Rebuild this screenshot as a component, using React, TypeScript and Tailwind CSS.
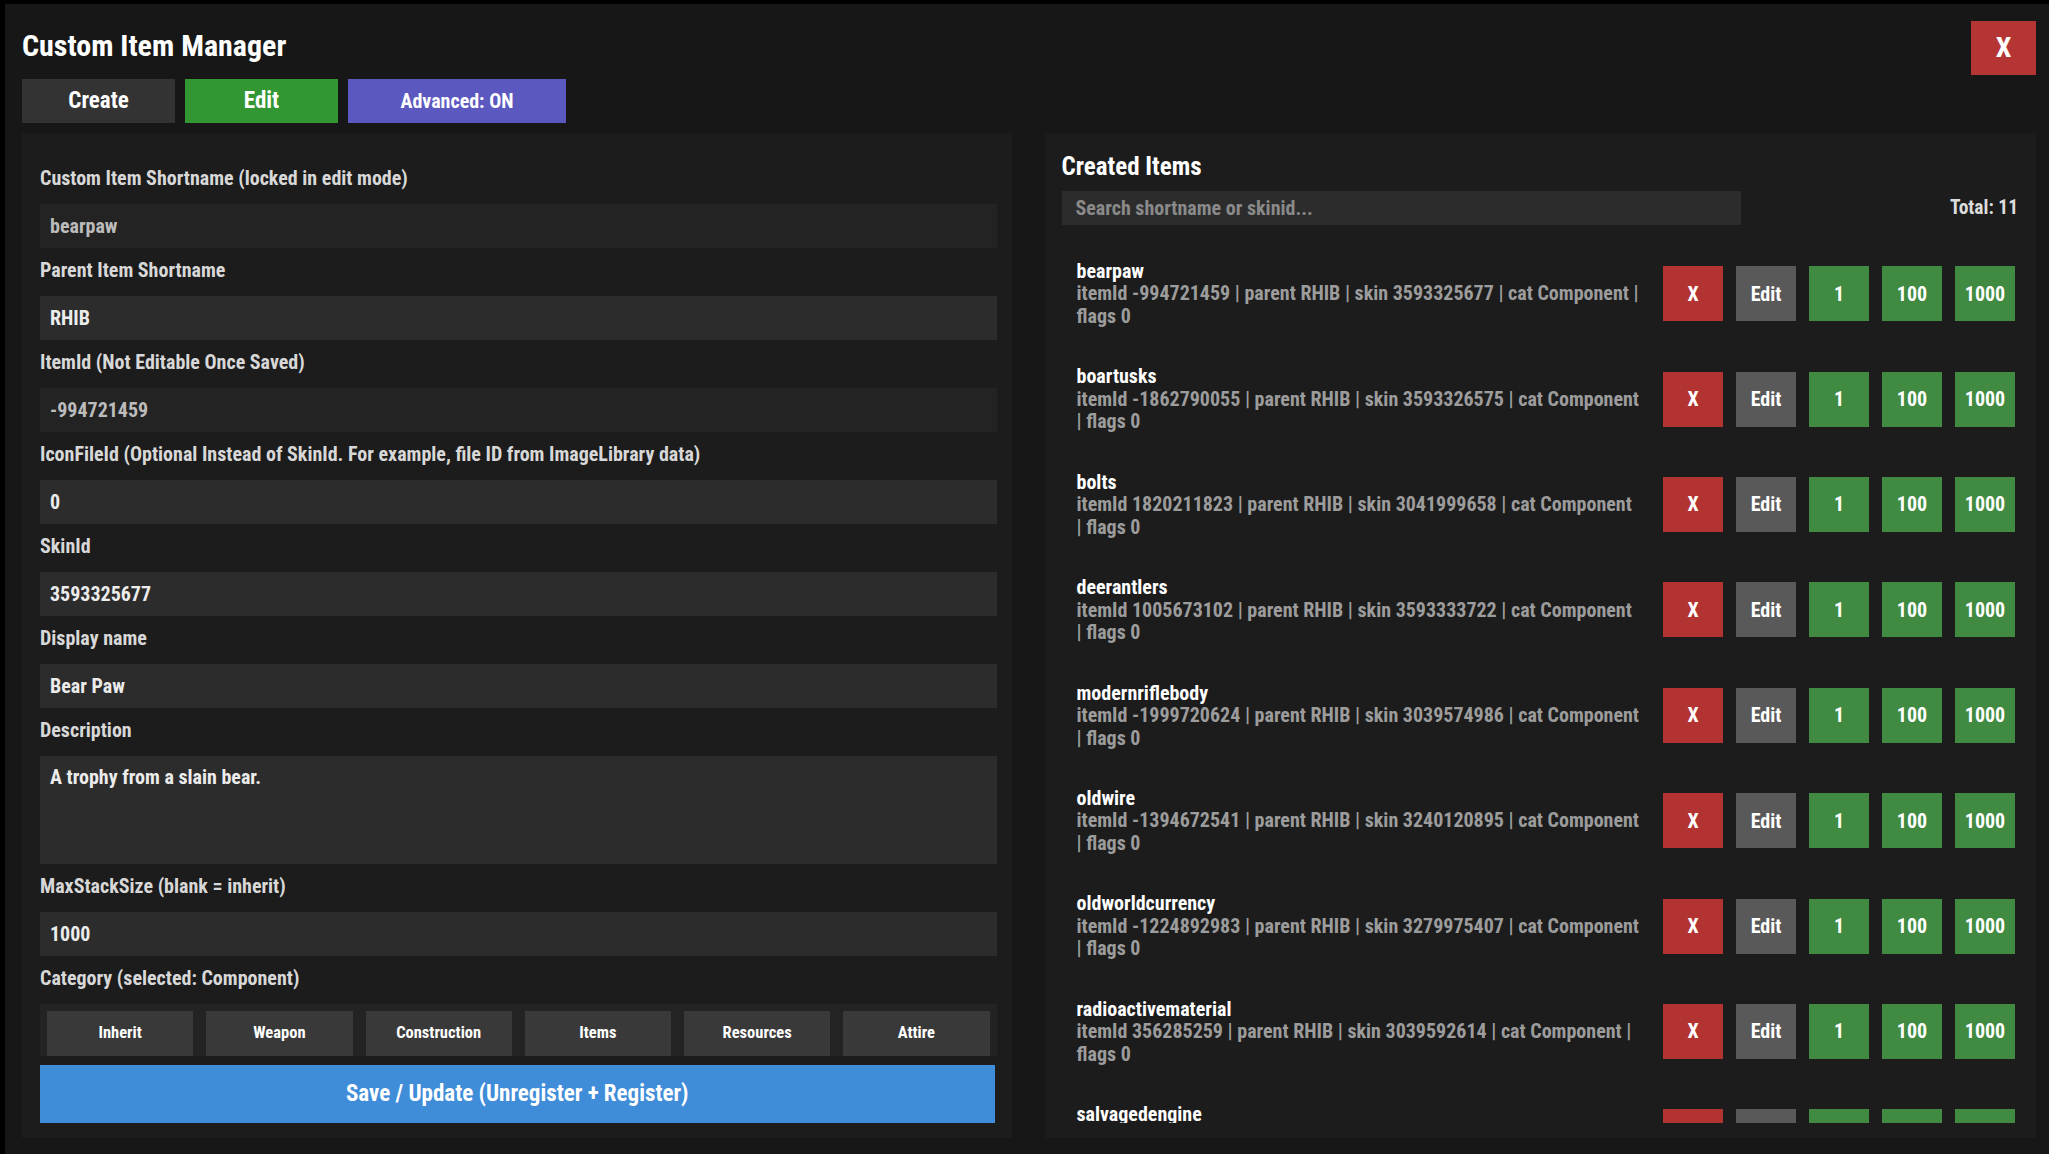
import React from "react";

const F = "font-['Roboto_Condensed','Roboto',sans-serif] [font-stretch:condensed] font-bold";

type Field = { label: string; value: string; locked?: boolean; area?: boolean };

const fields: Field[] = [
  { label: "Custom Item Shortname (locked in edit mode)", value: "bearpaw", locked: true },
  { label: "Parent Item Shortname", value: "RHIB" },
  { label: "ItemId (Not Editable Once Saved)", value: "-994721459", locked: true },
  { label: "IconFileId (Optional Instead of SkinId. For example, file ID from ImageLibrary data)", value: "0" },
  { label: "SkinId", value: "3593325677" },
  { label: "Display name", value: "Bear Paw" },
  { label: "Description", value: "A trophy from a slain bear.", area: true },
  { label: "MaxStackSize (blank = inherit)", value: "1000" },
];

const items: { name: string; l1: string; l2: string }[] = [
  { name: "bearpaw", l1: "itemId -994721459 | parent RHIB | skin 3593325677 | cat Component |", l2: "flags 0" },
  { name: "boartusks", l1: "itemId -1862790055 | parent RHIB | skin 3593326575 | cat Component", l2: "| flags 0" },
  { name: "bolts", l1: "itemId 1820211823 | parent RHIB | skin 3041999658 | cat Component", l2: "| flags 0" },
  { name: "deerantlers", l1: "itemId 1005673102 | parent RHIB | skin 3593333722 | cat Component", l2: "| flags 0" },
  { name: "modernriflebody", l1: "itemId -1999720624 | parent RHIB | skin 3039574986 | cat Component", l2: "| flags 0" },
  { name: "oldwire", l1: "itemId -1394672541 | parent RHIB | skin 3240120895 | cat Component", l2: "| flags 0" },
  { name: "oldworldcurrency", l1: "itemId -1224892983 | parent RHIB | skin 3279975407 | cat Component", l2: "| flags 0" },
  { name: "radioactivematerial", l1: "itemId 356285259 | parent RHIB | skin 3039592614 | cat Component |", l2: "flags 0" },
  { name: "salvagedengine", l1: "itemId -1407218564 | parent RHIB | skin 3240118532 | cat Component |", l2: "flags 0" },
];

const categories = ["Inherit", "Weapon", "Construction", "Items", "Resources", "Attire"];

function FieldRow({ f }: { f: Field }) {
  return (
    <div className="flex flex-col">
      <div className="h-[24px] leading-[24px] text-[20px] text-[#d8d8d8] whitespace-nowrap">{f.label}</div>
      <div
        className={
          "mt-[14px] mb-[10px] flex px-[10px] text-[20px] " +
          (f.area ? "h-[108px] items-start pt-[6px] " : "h-[44px] items-center ") +
          (f.locked ? "bg-[#232323] text-[#bcbcbc]" : "bg-[#2c2c2c] text-[#ececec]")
        }
      >
        {f.value}
      </div>
    </div>
  );
}

function ItemRow({ it }: { it: (typeof items)[number] }) {
  return (
    <div className="h-[105.4px] shrink-0 flex items-center pl-[15px] pr-[3px]">
      <div className="flex-1 min-w-0 flex flex-col text-[20px] leading-[22.5px]">
        <div className="text-white whitespace-nowrap">{it.name}</div>
        <div className="text-[#9c9c9c] whitespace-nowrap">{it.l1}</div>
        <div className="text-[#9c9c9c] whitespace-nowrap">{it.l2}</div>
      </div>
      <div className="flex gap-[13px] text-[20px] text-white">
        <div className="w-[60px] h-[55px] flex items-center justify-center bg-[#b33333]">X</div>
        <div className="w-[60px] h-[55px] flex items-center justify-center bg-[#595959]">Edit</div>
        <div className="w-[60px] h-[55px] flex items-center justify-center bg-[#408b41]">1</div>
        <div className="w-[60px] h-[55px] flex items-center justify-center bg-[#408b41]">100</div>
        <div className="w-[60px] h-[55px] flex items-center justify-center bg-[#408b41]">1000</div>
      </div>
    </div>
  );
}

export default function App() {
  return (
    <div className={"w-[2049px] h-[1154px] bg-black overflow-hidden " + F}>
      <div className="ml-[5px] mt-[4px] h-[1150px] bg-[#171717] flex flex-col pl-[17px] pr-[13px]">
        <div className="flex justify-between">
          <div className="flex flex-col">
            <div className="mt-[24px] h-[36px] leading-[36px] text-[30px] text-white">Custom Item Manager</div>
            <div className="mt-[15px] flex gap-[10px] text-[22px] text-white">
              <div className="w-[153px] h-[44px] flex items-center justify-center bg-[#333333] text-[23px]">Create</div>
              <div className="w-[153px] h-[44px] flex items-center justify-center bg-[#329632] text-[23px]">Edit</div>
              <div className="w-[218px] h-[44px] flex items-center justify-center bg-[#5b58bf] text-[20px]">Advanced: ON</div>
            </div>
          </div>
          <div className="mt-[17px] w-[65px] h-[54px] flex items-center justify-center bg-[#b53535] text-white text-[28px]">X</div>
        </div>

        <div className="mt-[10px] flex gap-[33px] h-[1005px]">
          <div className="flex-1 bg-[#1c1c1c] pl-[18px] pr-[15px] pt-[33px] flex flex-col">
            {fields.map((f) => (
              <FieldRow key={f.label} f={f} />
            ))}
            <div className="h-[24px] leading-[24px] text-[20px] text-[#d8d8d8]">Category (selected: Component)</div>
            <div className="mt-[14px] h-[52px] bg-[#232323] flex gap-[13px] pl-[7px] pr-[7px] pt-[7px]">
              {categories.map((c) => (
                <div key={c} className="flex-1 flex items-center justify-center bg-[#393939] text-white text-[16.5px]">
                  {c}
                </div>
              ))}
            </div>
            <div className="mt-[9px] mr-[2px] h-[58px] flex items-center justify-center bg-[#3f8cd9] text-white text-[23px]">
              Save / Update (Unregister + Register)
            </div>
          </div>

          <div className="flex-1 bg-[#1c1c1c] pl-[17px] pr-[18px] pb-[15px] flex flex-col">
            <div className="mt-[19px] h-[30px] leading-[30px] text-[25px] text-white">Created Items</div>
            <div className="mt-[9px] flex items-center justify-between">
              <div className="w-[679px] h-[34px] bg-[#2c2c2c] flex items-center pl-[14px] text-[20px] text-[#8a8a8a]">
                Search shortname or skinid...
              </div>
              <div className="text-[19.5px] text-[#dcdcdc]">Total: 11</div>
            </div>
            <div className="mt-[16px] flex-1 min-h-0 overflow-hidden flex flex-col">
              {items.map((it) => (
                <ItemRow key={it.name} it={it} />
              ))}
            </div>
          </div>
        </div>
      </div>
    </div>
  );
}
